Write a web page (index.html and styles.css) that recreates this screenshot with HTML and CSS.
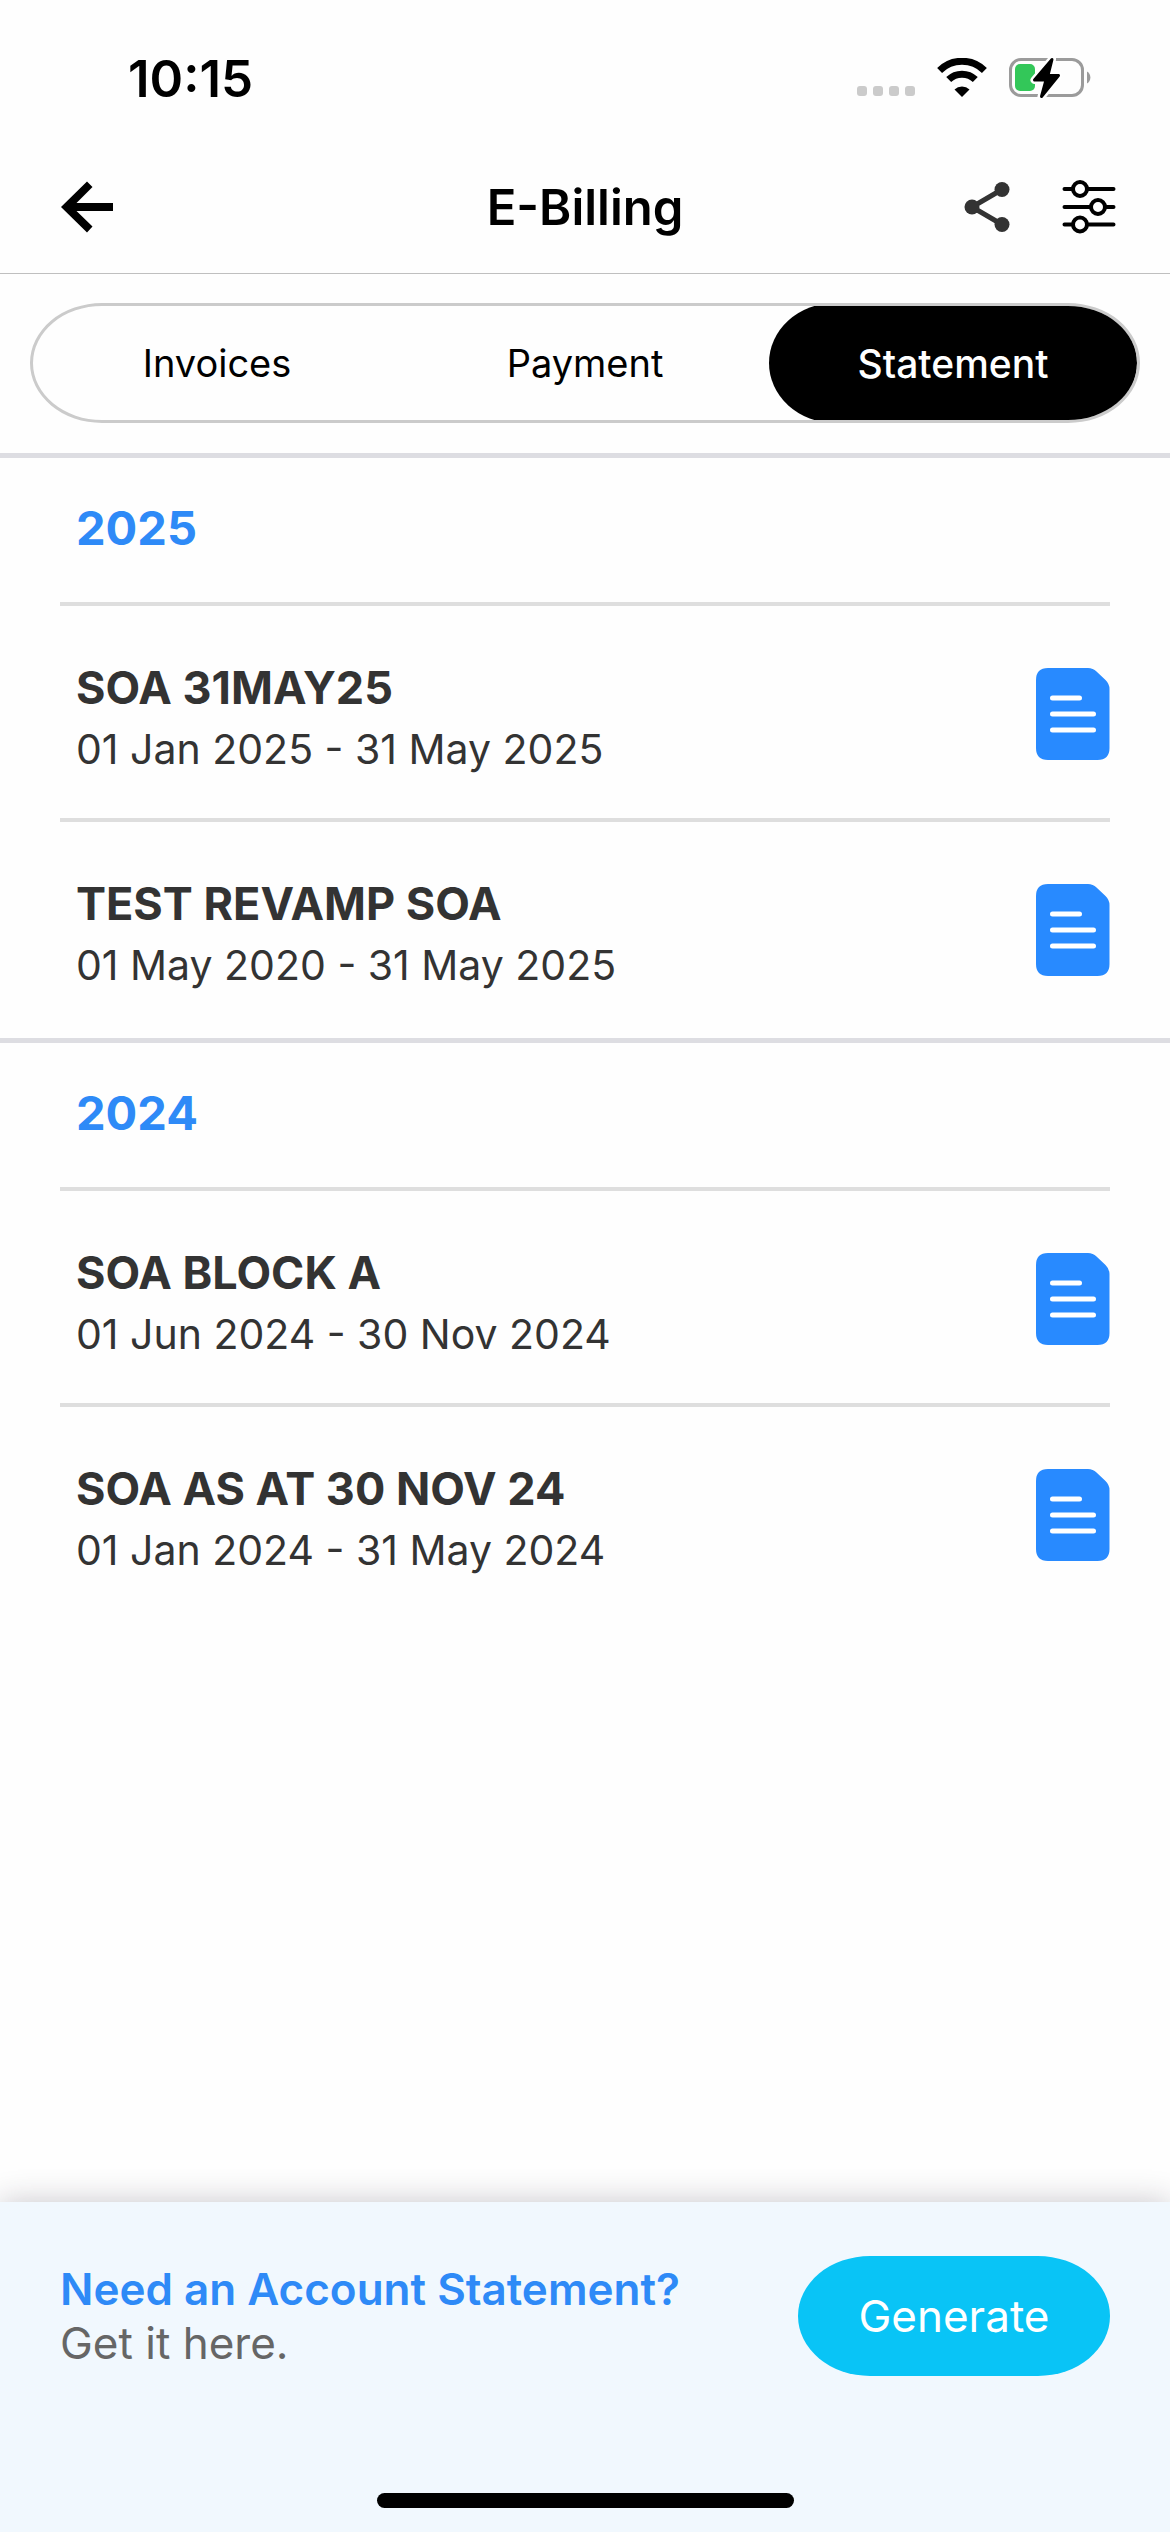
FILE: index.html
```html
<!DOCTYPE html>
<html lang="en">
<head>
    <meta charset="UTF-8">
    <meta name="viewport" content="width=device-width, initial-scale=1.0">
    <title>E-Billing</title>
    <link rel="stylesheet" href="styles.css">
</head>
<body>

<!-- Status bar -->
<div class="status-bar">
    <span class="time">10:15</span>
    <div class="status-icons">
        <svg class="signal" width="58" height="40" viewBox="0 0 58 40" fill="#cbcbcb">
            <rect x="0" y="28" width="10" height="10" rx="3"/>
            <rect x="16" y="28" width="10" height="10" rx="3"/>
            <rect x="32" y="28" width="10" height="10" rx="3"/>
            <rect x="48" y="28" width="10" height="10" rx="3"/>
        </svg>
        <svg class="wifi" width="50" height="40" viewBox="0 0 50 40" fill="none" stroke="#000">
            <path d="M2.6 12.4a32 32 0 0 1 44.8 0" stroke-width="7"/>
            <path d="M11.7 21.6a19 19 0 0 1 26.6 0" stroke-width="7"/>
            <path d="M25 39l-7.500-7.500a11 11 0 0 1 15 0z" fill="#000" stroke="none"/>
        </svg>
        <svg class="battery" width="82" height="42" viewBox="0 0 82 42">
            <rect x="1.500" y="2.500" width="72" height="36" rx="10.500" fill="none" stroke="#9b9b9b" stroke-width="3"/>
            <path d="M78 14.500a7 7 0 0 1 0 12z" fill="#9b9b9b"/>
            <rect x="6" y="7" width="20" height="27" rx="5" fill="#33c759"/>
            <g stroke-linejoin="round">
                <path d="M43 2.500 25.500 23h11.500L32.500 39.500 49.500 18.500H39z" fill="#fff" stroke="#fff" stroke-width="8"/>
                <path d="M43 2.500 25.500 23h11.500L32.500 39.500 49.500 18.500H39z" fill="#000" stroke="#000" stroke-width="3"/>
            </g>
        </svg>
    </div>
</div>

<!-- Header -->
<header class="header">
    <button class="icon-btn back" aria-label="Back">
        <svg width="52" height="52" viewBox="0 0 52 52"><path d="M26 .5l5.500 5.500L15.500 22H52v8H15.500l16 15.500L26 51.500 0 26z"/></svg>
    </button>
    <h1>E-Billing</h1>
    <div class="header-actions">
        <button class="icon-btn" aria-label="Share">
            <svg width="46" height="54" viewBox="0 0 46 54" fill="#333">
                <path d="M38 9.500 8 27l30 17.500" fill="none" stroke="#333" stroke-width="5"/>
                <circle cx="8" cy="27" r="7.500"/>
                <circle cx="38" cy="9.500" r="7.500"/>
                <circle cx="38" cy="44.500" r="7.500"/>
            </svg>
        </button>
        <button class="icon-btn" aria-label="Filter">
            <svg width="54" height="54" viewBox="0 0 54 54" fill="#fff" stroke="#000" stroke-width="4" stroke-linecap="round">
                <path d="M2.500 9h49M2.500 27h49M2.500 44.500h49"/>
                <circle cx="18" cy="9" r="7"/>
                <circle cx="36" cy="27" r="7"/>
                <circle cx="18" cy="44.500" r="7"/>
            </svg>
        </button>
    </div>
</header>

<!-- Tabs -->
<nav class="tabs-wrap">
    <div class="tabs">
        <button class="tab">Invoices</button>
        <button class="tab">Payment</button>
        <button class="tab active">Statement</button>
    </div>
</nav>

<!-- Statement list -->
<main>
    <section class="year">
        <h2>2025</h2>
        <a class="statement" href="#">
            <div class="statement-text">
                <h3>SOA 31MAY25</h3>
                <p>01 Jan 2025 - 31 May 2025</p>
            </div>
            <svg class="doc" viewBox="0 0 74 92"><use href="#doc"/></svg>
        </a>
        <a class="statement" href="#">
            <div class="statement-text">
                <h3>TEST REVAMP SOA</h3>
                <p>01 May 2020 - 31 May 2025</p>
            </div>
            <svg class="doc" viewBox="0 0 74 92"><use href="#doc"/></svg>
        </a>
    </section>

    <section class="year">
        <h2>2024</h2>
        <a class="statement" href="#">
            <div class="statement-text">
                <h3>SOA BLOCK A</h3>
                <p>01 Jun 2024 - 30 Nov 2024</p>
            </div>
            <svg class="doc" viewBox="0 0 74 92"><use href="#doc"/></svg>
        </a>
        <a class="statement" href="#">
            <div class="statement-text">
                <h3>SOA AS AT 30 NOV 24</h3>
                <p>01 Jan 2024 - 31 May 2024</p>
            </div>
            <svg class="doc" viewBox="0 0 74 92"><use href="#doc"/></svg>
        </a>
    </section>
</main>

<!-- Bottom bar -->
<footer class="footer">
    <div class="footer-row">
        <div>
            <p class="question">Need an Account Statement?</p>
            <p class="hint">Get it here.</p>
        </div>
        <button class="generate">Generate</button>
    </div>
    <div class="home-indicator"></div>
</footer>

<!-- Document icon used by every row -->
<svg class="sprite" width="0" height="0">
    <symbol id="doc" viewBox="0 0 74 92">
        <path d="M12 0h40q5 0 8.500 3.500l9 8.500q4 4 4 9v59q0 12-12 12H12Q0 92 0 80V12Q0 0 12 0z" fill="#288aff"/>
        <path d="M16.500 30h27M16.500 46h41M16.500 62h41" stroke="#fff" stroke-width="5" stroke-linecap="round"/>
    </symbol>
</svg>

</body>
</html>
```
FILE: styles.css
```css
* {
    box-sizing: border-box;
}
body {
    margin: 0;
    min-height: 100vh;
    display: flex;
    flex-direction: column;
    background: #fefefe;
    color: #333;
    font-family: Inter, "Liberation Sans", sans-serif;
}
h1, h2, h3, p {
    margin: 0;
}
button {
    border: none;
    padding: 0;
    background: none;
    font-family: inherit;
    color: inherit;
    cursor: pointer;
}
svg {
    display: block;
}

/* Status bar */
.status-bar {
    display: flex;
    justify-content: space-between;
    align-items: center;
    height: 141px;
    padding: 15px 79px 0 128px;
    color: #000;
}
.time {
    font-size: 51px;
    font-weight: 600;
}
.status-icons {
    display: flex;
    align-items: center;
    gap: 22px;
}

/* Header */
.header {
    display: grid;
    grid-template-columns: 1fr auto 1fr;
    align-items: center;
    height: 133px;
    padding: 0 54px;
    border-bottom: 1px solid #bfbfbf;
    color: #000;
}
.header h1 {
    font-size: 49px;
    font-weight: 600;
}
.back {
    justify-self: start;
    padding-left: 7px;
}
.header-actions {
    display: flex;
    justify-content: flex-end;
    gap: 52px;
}

/* Tabs */
.tabs-wrap {
    padding: 29px 30px 30px;
}
.tabs {
    display: flex;
    height: 120px;
    border: 3px solid #cbcbcb;
    border-radius: 72px / 60px;
    overflow: hidden;
}
.tab {
    flex: 1;
    margin: -3px 0;
    font-size: 38px;
    font-weight: 400;
    color: #000;
}
.tab.active {
    background: #000;
    color: #fff;
    font-size: 39px;
    font-weight: 500;
    border-radius: 66px / 60px;
}

/* Statement list */
.year {
    padding: 0 60px;
    border-top: 5px solid #dddde2;
}
.year h2 {
    padding: 41px 16px 45px;
    font-size: 47px;
    line-height: 58px;
    font-weight: 700;
    color: #2e8af7;
}
.statement {
    display: flex;
    justify-content: space-between;
    align-items: center;
    height: 216px;
    padding: 4px 0 0 16px;
    border-top: 4px solid #dedede;
    color: #333;
    text-decoration: none;
}
.statement:last-child {
    margin-bottom: 4px;
}
.statement-text {
    padding-top: 10px;
}
.statement h3 {
    font-size: 45px;
    line-height: 60px;
    font-weight: 700;
}
.statement p {
    font-size: 41px;
    line-height: 62px;
}
.doc {
    width: 74px;
    height: 92px;
}

/* Bottom bar */
.footer {
    position: sticky;
    bottom: 0;
    margin-top: auto;
    padding: 54px 60px 24px;
    background: #f1f8fe;
    box-shadow: 0 0 30px rgba(30, 20, 40, 0.24);
}
.footer-row {
    display: flex;
    justify-content: space-between;
    align-items: center;
}
.question {
    font-size: 44px;
    line-height: 54px;
    font-weight: 600;
    color: #2e8af7;
}
.hint {
    font-size: 44px;
    line-height: 54px;
    color: #666;
}
.generate {
    width: 312px;
    height: 120px;
    border-radius: 72px / 60px;
    background: #09c4f6;
    color: #fff;
    font-size: 44px;
}
.home-indicator {
    width: 417px;
    height: 15px;
    margin: 117px auto 0;
    border-radius: 8px;
    background: #000;
}
.sprite {
    position: absolute;
}
```
